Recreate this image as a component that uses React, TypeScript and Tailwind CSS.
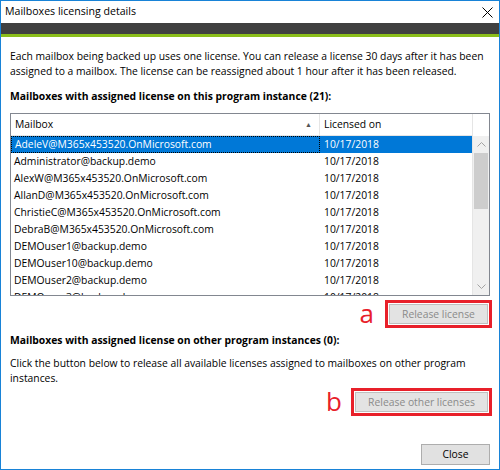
import React from 'react'

const rows = [
  'AdeleV@M365x453520.OnMicrosoft.com',
  'Administrator@backup.demo',
  'AlexW@M365x453520.OnMicrosoft.com',
  'AllanD@M365x453520.OnMicrosoft.com',
  'ChristieC@M365x453520.OnMicrosoft.com',
  'DebraB@M365x453520.OnMicrosoft.com',
  'DEMOuser1@backup.demo',
  'DEMOuser10@backup.demo',
  'DEMOuser2@backup.demo',
  'DEMOuser3@backup.demo',
]

function GhostButton({ label, w }: { label: string; w: string }) {
  return (
    <div className="border-[3px] border-[#e8202a] p-[1px]">
      <div className={`${w} h-[20px] flex items-center justify-center bg-[#e3e3e3] border border-[#bfbfbf] text-[#8a8a8a]`}>
        {label}
      </div>
    </div>
  )
}

export default function App() {
  return (
    <div
      className="w-[500px] h-[470px] bg-white border border-[#1883d7] flex flex-col text-[10.35px] text-black overflow-hidden"
      style={{ fontFamily: '"Open Sans", "Noto Sans", sans-serif' }}
    >
      <div className="h-[22px] shrink-0 flex items-center justify-between pl-[4px] pr-[6px] text-[10.6px]">
        <span>Mailboxes licensing details</span>
        <svg width="11" height="11" viewBox="0 0 11 11" className="stroke-black">
          <path d="M0.5 0.5 L10.5 10.5 M10.5 0.5 L0.5 10.5" strokeWidth="1" />
        </svg>
      </div>
      <div className="h-[11px] shrink-0 bg-[#404040]" />
      <div className="h-[3px] shrink-0 bg-[#8bbe1b]" />

      <div className="flex flex-col px-[9px] pt-[12px] leading-[15px]">
        <p>
          Each mailbox being backed up uses one license. You can release a license 30 days after it has been
          assigned to a mailbox. The license can be reassigned about 1 hour after it has been released.
        </p>
        <p className="font-bold mt-[10px]">Mailboxes with assigned license on this program instance (21):</p>

        <div className="mt-[9px] h-[183px] shrink-0 border border-[#828790] flex overflow-hidden">
          <div className="flex-1 flex flex-col overflow-hidden">
            <div className="h-[22px] flex shrink-0 border-b border-[#e5e5e5]">
              <div className="w-[309px] flex items-center justify-between pl-[4px] pr-[7px] border-r border-[#e5e5e5]">
                <span>Mailbox</span>
                <span className="text-[7px] text-[#555]">▲</span>
              </div>
              <div className="flex-1 flex items-center pl-[4px]">Licensed on</div>
            </div>
            {rows.map((r, i) => (
              <div
                key={r}
                className={`h-[17px] shrink-0 flex ${i === 0 ? 'bg-[#0078d7] text-white' : ''}`}
              >
                <div className={`w-[309px] flex items-center pl-[3px] ${i === 0 ? 'border border-dotted border-black' : ''}`}>
                  {r}
                </div>
                <div className="flex-1 flex items-center pl-[4px]">10/17/2018</div>
              </div>
            ))}
          </div>
          <div className="w-[17px] flex flex-col border-l border-[#e5e5e5]">
            <div className="h-[22px] bg-white shrink-0" />
            <div className="flex-1 flex flex-col bg-[#f0f0f0]">
              <div className="h-[17px] flex items-center justify-center text-[#a3a3a3]">
                <svg width="9" height="5" viewBox="0 0 9 5" fill="none" stroke="currentColor">
                  <path d="M0.5 4.5 L4.5 0.5 L8.5 4.5" />
                </svg>
              </div>
              <div className="h-[56px] mx-[1px] bg-[#cdcdcd]" />
              <div className="flex-1" />
              <div className="h-[17px] flex items-center justify-center text-[#a3a3a3]">
                <svg width="9" height="5" viewBox="0 0 9 5" fill="none" stroke="currentColor">
                  <path d="M0.5 0.5 L4.5 4.5 L8.5 0.5" />
                </svg>
              </div>
            </div>
          </div>
        </div>

        <div className="flex justify-end items-center gap-[11px] mt-[4px] -mr-[2px]">
          <span className="text-[#e8202a] text-[26px] leading-[26px] pb-[2px]">a</span>
          <GhostButton label="Release license" w="w-[99px]" />
        </div>

        <p className="font-bold mt-[5px]">Mailboxes with assigned license on other program instances (0):</p>
        <p className="mt-[8px] pr-[20px]">
          Click the button below to release all available licenses assigned to mailboxes on other program
          instances.
        </p>

        <div className="flex justify-end items-center gap-[9px] mt-[2px] -mr-[2px]">
          <span className="text-[#e8202a] text-[26px] leading-[26px] pb-[2px]">b</span>
          <GhostButton label="Release other licenses" w="w-[133px]" />
        </div>

        <div className="flex justify-end mt-[28px]">
          <div className="w-[69px] h-[21px] flex items-center justify-center bg-[#e1e1e1] border border-[#adadad]">
            Close
          </div>
        </div>
      </div>
    </div>
  )
}
